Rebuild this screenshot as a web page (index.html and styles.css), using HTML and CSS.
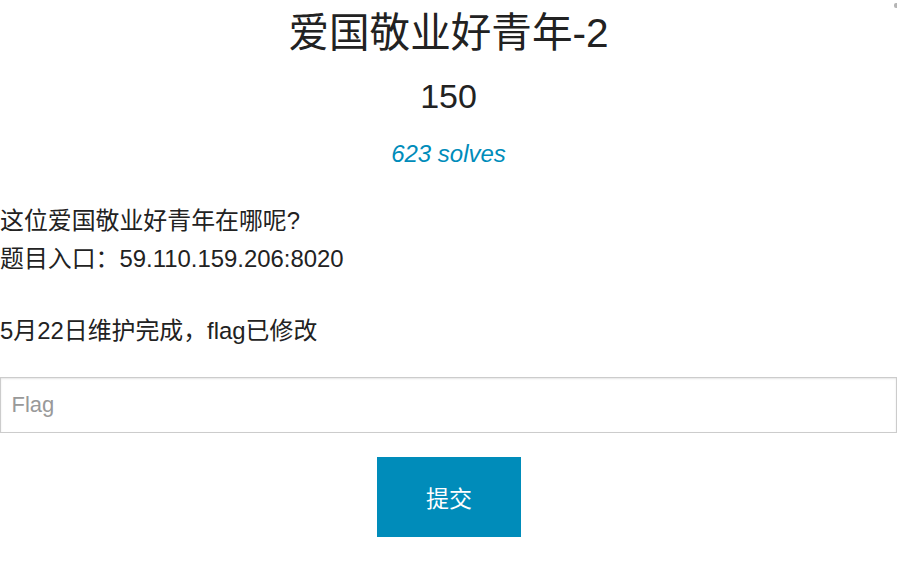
FILE: index.html
```html
<!DOCTYPE html>
<html lang="zh">
<head>
<meta charset="utf-8">
<title>爱国敬业好青年-2</title>
<link rel="stylesheet" href="styles.css">
</head>
<body>
<div class="modal">
  <span class="close-mark"></span>
  <header class="head">
    <h1 class="title">爱国敬业好青年-2</h1>
    <div class="value">150</div>
    <div class="solves">623 solves</div>
  </header>
  <div class="desc">
    <p class="para">这位爱国敬业好青年在哪呢?<br>题目入口：59.110.159.206:8020</p>
    <p class="para">5月22日维护完成，flag已修改</p>
  </div>
  <form class="flag-form" onsubmit="return false;">
    <input class="flag-input" type="text" placeholder="Flag">
    <div class="actions">
      <button class="submit-btn" type="submit">提交</button>
    </div>
  </form>
</div>
</body>
</html>
```
FILE: styles.css
```css
html, body {
  margin: 0;
  padding: 0;
  background: #fff;
}
body {
  font-family: "Liberation Sans", "Noto Sans CJK SC", sans-serif;
  color: #222;
  width: 897px;
  overflow: hidden;
}
.modal {
  position: relative;
}
.close-mark {
  position: absolute;
  right: 0;
  top: 3px;
  width: 3px;
  height: 5px;
  background: #b5b5b5;
  border-radius: 2px 0 0 2px;
}
.head {
  text-align: center;
}
.title {
  margin: 0;
  font-size: 40.6px;
  font-weight: normal;
  line-height: 66px;
}
.value {
  margin-top: 10px;
  font-size: 34px;
  line-height: 40px;
}
.solves {
  margin-top: 20px;
  font-size: 24px;
  line-height: 36px;
  font-style: italic;
  color: #008cba;
}
.desc {
  margin-top: 29.75px;
  font-size: 23.9px;
  line-height: 38.5px;
}
.para {
  margin: 0 0 33.5px 0;
}
.para:last-child {
  margin-bottom: 0;
}
.flag-form {
  margin-top: 26.25px;
}
.flag-input {
  display: block;
  box-sizing: border-box;
  width: 100%;
  height: 56px;
  margin: 0;
  padding: 0 10.5px;
  border: 1px solid #ccc;
  border-radius: 0;
  box-shadow: inset 0 1px 2px rgba(0, 0, 0, 0.1);
  font-family: "Liberation Sans", "Noto Sans CJK SC", sans-serif;
  font-size: 22px;
  color: #222;
  background: #fff;
  outline: none;
}
.flag-input::placeholder {
  color: #999;
}
.actions {
  display: flex;
  justify-content: center;
  padding-top: 24px;
  padding-left: 1px;
}
.submit-btn {
  width: 144px;
  height: 80px;
  border: 0;
  margin: 0;
  padding: 0;
  background: #008cba;
  color: #fff;
  font-family: "Liberation Sans", "Noto Sans CJK SC", sans-serif;
  font-size: 23px;
  cursor: pointer;
}
```
